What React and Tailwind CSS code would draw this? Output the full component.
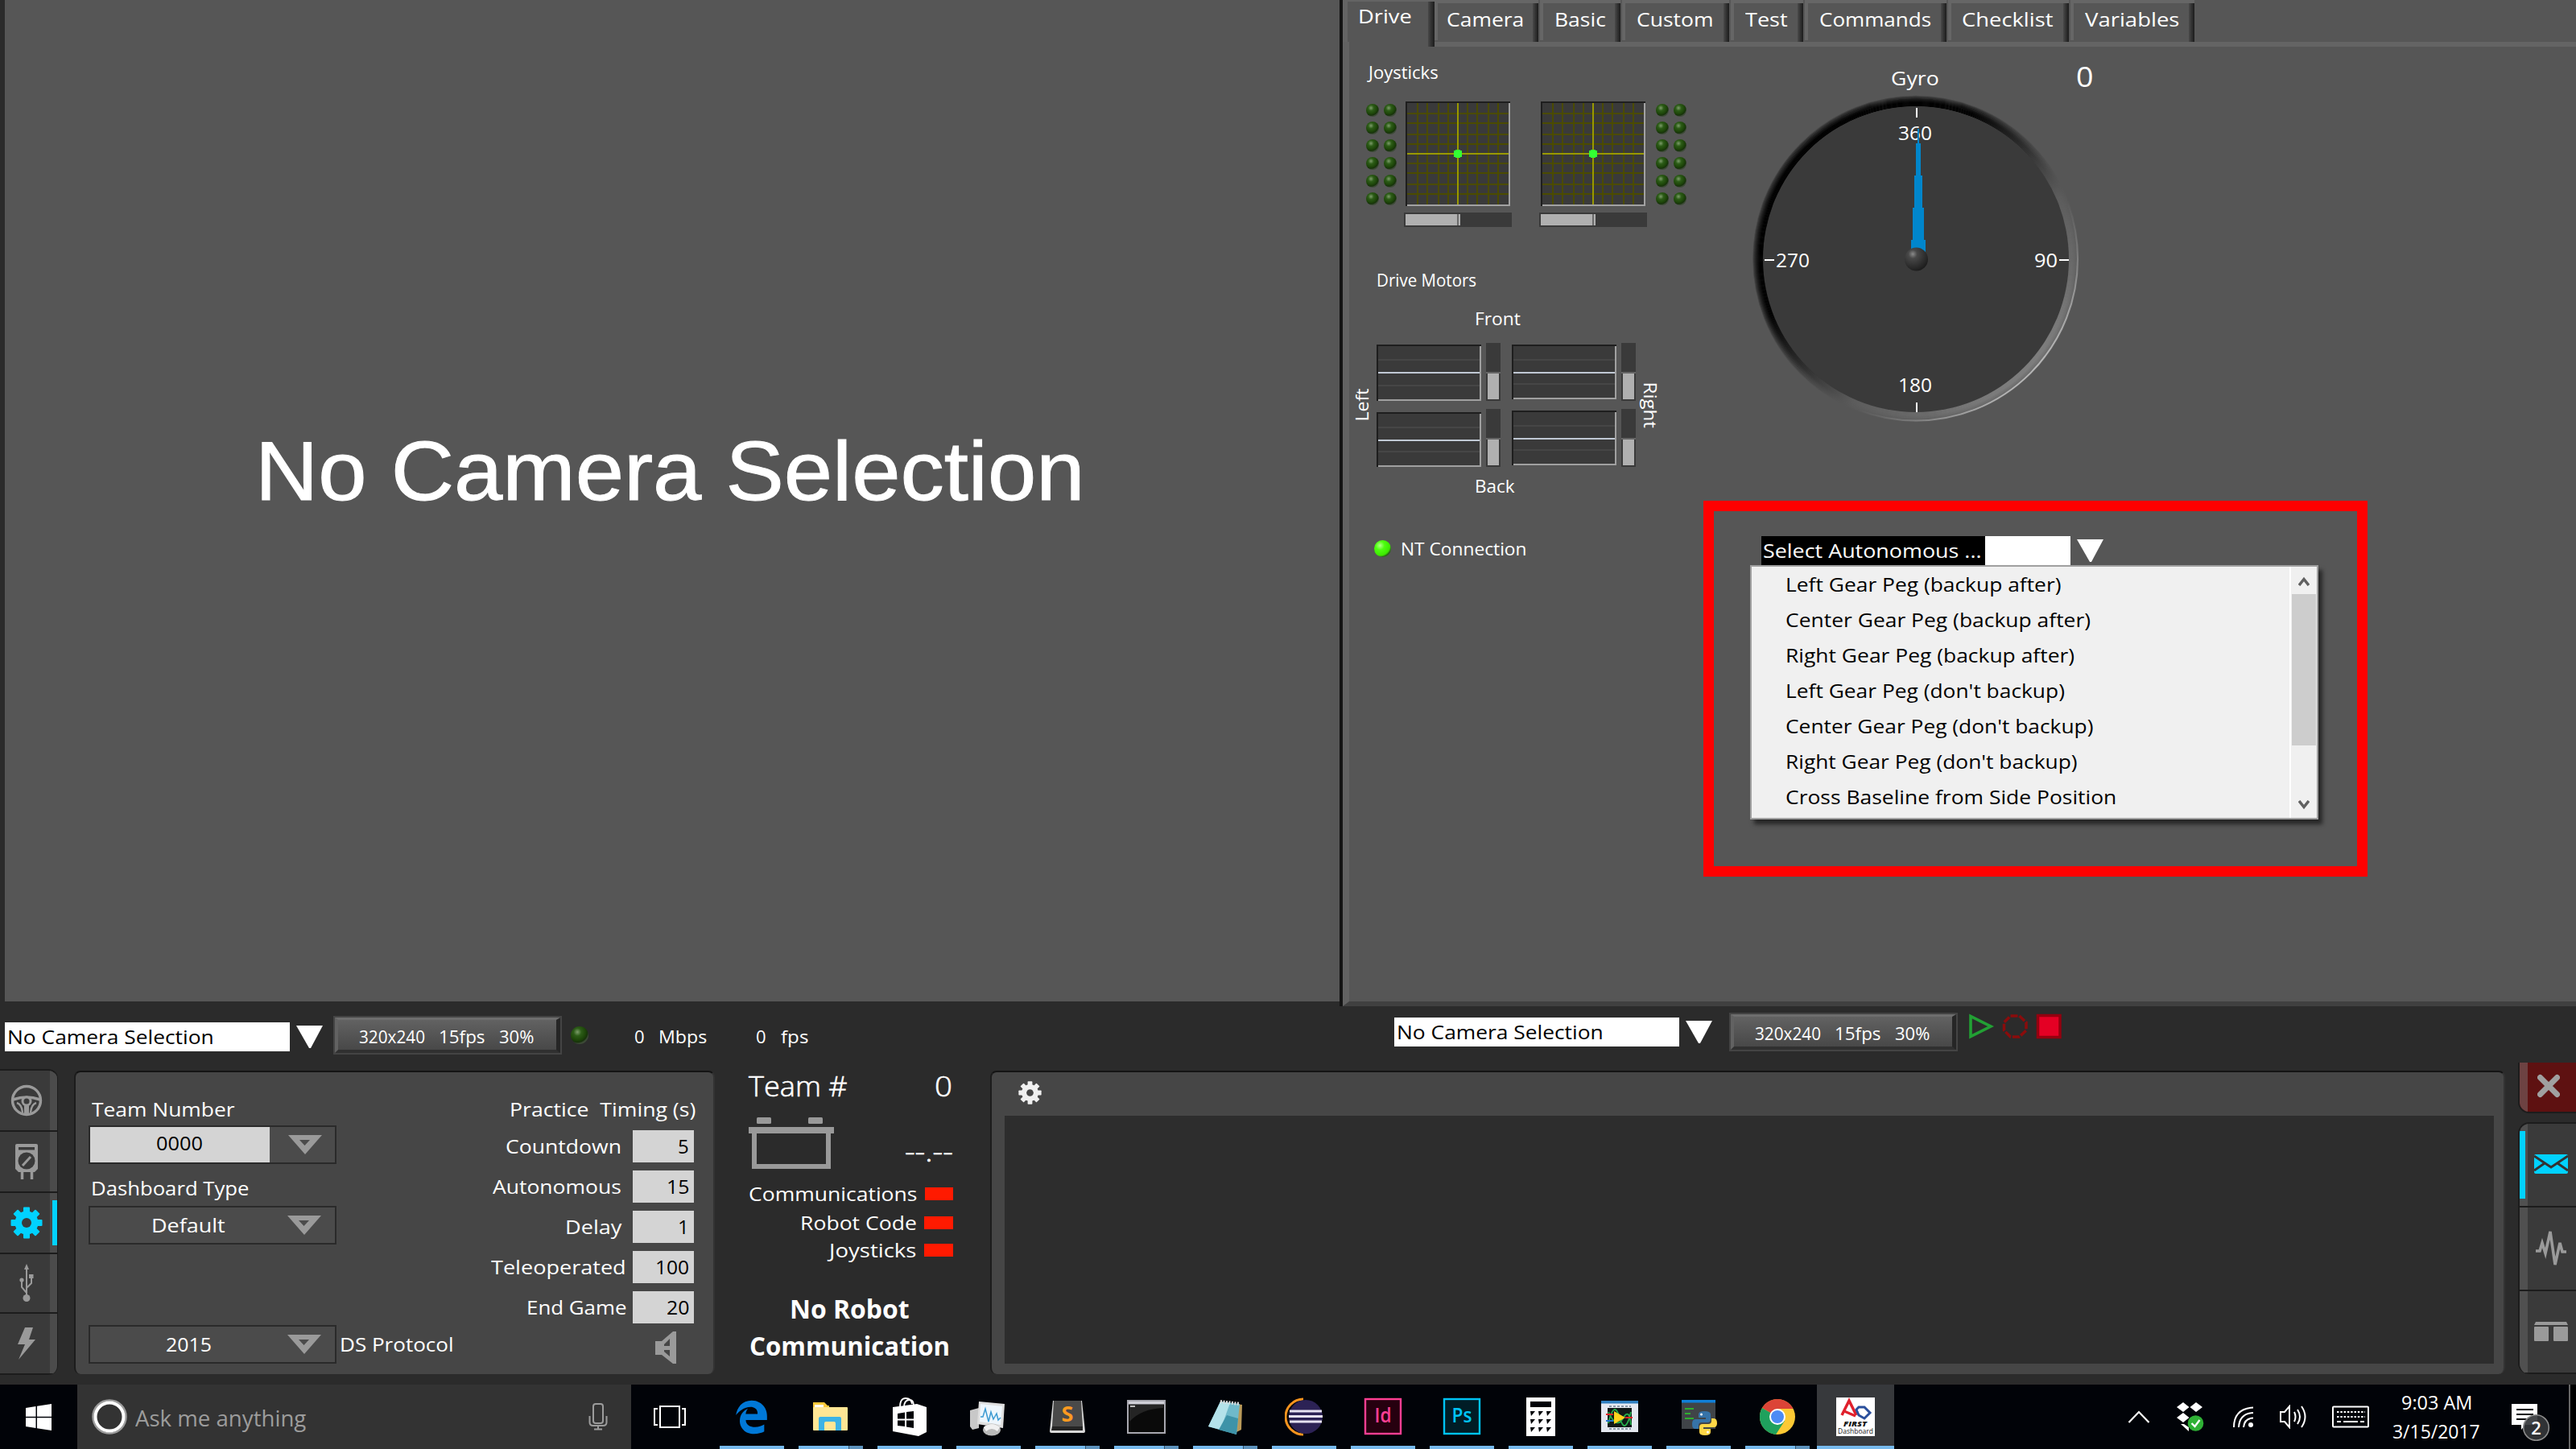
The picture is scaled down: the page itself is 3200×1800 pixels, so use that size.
import React, { useLayoutEffect, useRef, useState } from "react";

/* A label whose glyph run is fitted to the width of its box. */
function T({ className = "", children }) {
  const box = useRef(null);
  const run = useRef(null);
  const [k, setK] = useState(1);
  useLayoutEffect(() => {
    setK(box.current.clientWidth / run.current.offsetWidth);
  }, []);
  return (
    <div ref={box} className={"shrink-0 whitespace-pre " + className}>
      <span ref={run} className="inline-block origin-left" style={{ transform: `scaleX(${k})` }}>
        {children}
      </span>
    </div>
  );
}

const SM = "text-[22px] leading-[30px] ";
const MD = "text-2xl ";

/* ---------- tabs ---------- */
function Tab({ box, text, label }) {
  return (
    <div className={"flex h-[50px] shrink-0 border-t-4 border-l-4 border-[#666] bg-[#565656] " + box}>
      <T className={"mt-[4px] " + MD + text}>{label}</T>
      <div className="ml-auto h-[50px] w-[7px] shrink-0 bg-gradient-to-r from-[#4a4a4a] to-[#1c1c1c]" />
    </div>
  );
}

function Tabs() {
  return (
    <div className="flex h-[52px] shrink-0 gap-[2px]">
      <div className="flex h-[58px] w-[114px] shrink-0 border-t-2 border-l-[6px] border-[#646464] bg-[#565656]">
        <T className={"mt-[2px] ml-[13px] w-[67px] " + MD}>Drive</T>
        <div className="ml-auto h-[56px] w-2 shrink-0 bg-gradient-to-r from-[#484848] to-[#1c1c1c]" />
      </div>
      <Tab box="w-[129px] -ml-[2px]" text="ml-[11px] w-[96px]" label="Camera" />
      <Tab box="w-[100px]" text="ml-[14px] w-[64px]" label="Basic" />
      <Tab box="w-[133px]" text="ml-[14px] w-[95px]" label="Custom" />
      <Tab box="w-[90px]" text="ml-[14px] w-[53px]" label="Test" />
      <Tab box="w-[176px]" text="ml-[14px] w-[139px]" label="Commands" />
      <Tab box="w-[150px]" text="ml-[13px] w-[114px]" label="Checklist" />
      <Tab box="w-[154px]" text="ml-[14px] w-[118px]" label="Variables" />
    </div>
  );
}

/* ---------- joysticks ---------- */
function Led({ className }) {
  return (
    <div
      className={
        "shrink-0 rounded-full bg-[radial-gradient(circle_at_38%_32%,#7d9c6b_0%,#2c5c17_24%,#1d4509_50%,#17320b_62%,#3c4a36_70%)] " +
        className
      }
    />
  );
}

function LedGrid({ className }) {
  return (
    <div className={"mt-[3px] grid grid-cols-2 gap-[6px] " + className}>
      {Array.from({ length: 12 }, (_, i) => (
        <Led key={i} className="size-4" />
      ))}
    </div>
  );
}

function Stick() {
  const xs = [15, 27, 41, 53, 77, 89, 103, 115];
  const ys = [15, 27, 41, 53, 77, 89, 103, 115];
  return (
    <div className="w-[134px] shrink-0">
      <svg width="130" height="130" viewBox="0 0 130 130" className="ml-[2px] block" shapeRendering="crispEdges">
        <rect width="130" height="130" fill="#3a3a3a" />
        {xs.map((x) => <rect key={"x" + x} x={x - 1} width="2" height="130" fill="#4b4b00" />)}
        {ys.map((y) => <rect key={"y" + y} y={y - 1} width="130" height="2" fill="#4b4b00" />)}
        <rect x="64" width="2" height="130" fill="#999900" />
        <rect y="64" width="130" height="2" fill="#999900" />
        <path d="M0 130V0H130V2H2V130Z" fill="#1e1e1e" />
        <path d="M130 2V130H2V128H128V2Z" fill="#a2a2a2" />
        <rect x="60" y="61" width="10" height="8" fill="#33ff33" />
        <rect x="62" y="60" width="6" height="10" fill="#33ff33" />
      </svg>
      <div className="mt-2 flex h-[18px] bg-[#3a3a3a] p-[2px]">
        <div className="w-16 bg-[#b0b0b0]" />
        <div className="w-[2px] bg-[#6a6a6a]" />
        <div className="w-[2px] bg-[#b0b0b0]" />
      </div>
    </div>
  );
}

/* ---------- motors ---------- */
function Motor({ h, mid, lines, className = "" }) {
  return (
    <svg width="130" height={h} className={"block shrink-0 " + className} shapeRendering="crispEdges">
      <rect width="130" height={h} fill="#3a3a3a" />
      {lines.map((y) => <rect key={y} y={y - 1} width="130" height="2" fill="#464646" />)}
      <rect y={mid - 1} width="130" height="2" fill="#c0c8d4" />
      <path d={`M0 ${h}V0H130V2H2V${h}Z`} fill="#1e1e1e" />
      <path d={`M130 2V${h}H2V${h - 2}H128V2Z`} fill="#a0a0a0" />
    </svg>
  );
}

function Meter() {
  return (
    <div className="flex h-[72px] w-[18px] flex-col bg-[#3a3a3a]">
      <div className="mt-9 h-[2px] bg-[#666]" />
      <div className="mx-[2px] h-8 bg-[#b0b0b0]" />
    </div>
  );
}

function Motors() {
  return (
    <div className="mt-4 flex h-[154px]">
      <div className="flex w-[34px] items-center justify-center pr-[6px]">
        <T className={"w-[41px] -rotate-90 " + SM}>Left</T>
      </div>
      <div>
        <Motor h={70} mid={35} lines={[19, 51]} className="mt-[2px]" />
        <Motor h={68} mid={35} lines={[19, 49]} className="mt-[14px]" />
      </div>
      <div className="ml-[6px] flex flex-col gap-[10px]"><Meter /><Meter /></div>
      <div className="ml-[14px]">
        <Motor h={68} mid={35} lines={[19, 49]} className="mt-[2px]" />
        <Motor h={68} mid={35} lines={[19, 49]} className="mt-[14px]" />
      </div>
      <div className="ml-[6px] flex flex-col gap-[10px]"><Meter /><Meter /></div>
      <div className="flex w-9 items-center justify-center">
        <T className={"w-[57px] rotate-90 " + SM}>Right</T>
      </div>
    </div>
  );
}

/* ---------- gyro ---------- */
function Dial() {
  const rings = Array.from({ length: 13 }, (_, i) => i);
  return (
    <svg width="416" height="416" viewBox="2172 114 416 416" className="ml-[56px] block">
      <defs>
        <linearGradient id="rim" x1="0.14" y1="0.14" x2="0.86" y2="0.86">
          <stop offset="0" stopColor="#000" />
          <stop offset="0.3" stopColor="#020202" />
          <stop offset="0.5" stopColor="#303030" />
          <stop offset="0.68" stopColor="#5c5c5c" />
          <stop offset="0.88" stopColor="#6c6c6c" />
          <stop offset="1" stopColor="#808080" />
        </linearGradient>
        <linearGradient id="shine" x1="0.14" y1="0.14" x2="0.86" y2="0.86">
          <stop offset="0.7" stopColor="#888" stopOpacity="0" />
          <stop offset="1" stopColor="#bbb" />
        </linearGradient>
        <radialGradient id="hub" cx="0.35" cy="0.28" r="0.75">
          <stop offset="0" stopColor="#8a8a8a" />
          <stop offset="0.25" stopColor="#484848" />
          <stop offset="0.8" stopColor="#282828" />
          <stop offset="1" stopColor="#1c1c1c" />
        </radialGradient>
      </defs>
      {rings.map((i) => (
        <circle key={i} cx="2380" cy="321.5" r={190 + i} fill="none" stroke="url(#rim)" strokeWidth="1.5" opacity={Math.min(1, 1.4 - i / 10)} />
      ))}
      <circle cx="2380" cy="321.5" r="201" fill="none" stroke="url(#shine)" strokeWidth="2" />
      <circle cx="2380" cy="322" r="190" fill="#3a3a3a" />
      <g fill="#fff" shapeRendering="crispEdges">
        <rect x="2380" y="134" width="2" height="12" />
        <rect x="2380" y="500" width="2" height="12" />
        <rect x="2192" y="322" width="12" height="2" />
        <rect x="2558" y="322" width="12" height="2" />
      </g>
      <g fill="#fff" fontSize="24">
        <text x="2358" y="174" textLength="42" lengthAdjust="spacingAndGlyphs">360</text>
        <text x="2206" y="332" textLength="42" lengthAdjust="spacingAndGlyphs">270</text>
        <text x="2527" y="332" textLength="29" lengthAdjust="spacingAndGlyphs">90</text>
        <text x="2358" y="487" textLength="42" lengthAdjust="spacingAndGlyphs">180</text>
      </g>
      <path
        d="M2382 160h2V178h2V218h2V258h2V298h2V314H2374V298h2V258h2V218h2V178h2Z"
        fill="#0086cc"
        shapeRendering="crispEdges"
      />
      <circle cx="2380.500" cy="322" r="14.500" fill="url(#hub)" />
    </svg>
  );
}

/* ---------- autonomous selector ---------- */
function Down({ className = "" }) {
  return (
    <svg width="33" height="28" viewBox="0 0 33 28" className={"block shrink-0 " + className}>
      <path d="M0 0H33L18 28H16Z" fill="#fff" />
    </svg>
  );
}

const modes = [
  ["w-[343px]", "Left Gear Peg (backup after)"],
  ["w-[379px]", "Center Gear Peg (backup after)"],
  ["w-[359px]", "Right Gear Peg (backup after)"],
  ["w-[347px]", "Left Gear Peg (don't backup)"],
  ["w-[382px]", "Center Gear Peg (don't backup)"],
  ["w-[362px]", "Right Gear Peg (don't backup)"],
  ["w-[411px]", "Cross Baseline from Side Position"],
];

function Selector() {
  return (
    <div className="mt-[92px] h-[467px] w-[825px] border-[13px] border-[#ff0000]">
      <div className="mt-[31px] ml-[59px] flex">
        <div className="h-9 w-[384px] bg-white">
          <div className="h-9 w-[278px] bg-black pl-[2px]">
            <T className={"w-[271px] pt-[2px] text-white " + MD}>Select Autonomous ...</T>
          </div>
        </div>
        <Down className="mt-1 ml-2" />
      </div>
      <div className="ml-[45px] flex h-[316px] w-[706px] border-2 border-[#a0a0a0] bg-[#f0f0f0] shadow-[5px_6px_5px_rgba(0,0,0,0.55)]">
        <div className="flex-1 pl-[42px] text-black">
          {modes.map(([w, name]) => (
            <T key={name} className={"text-2xl leading-[44px] " + w}>{name}</T>
          ))}
        </div>
        <div className="flex w-[34px] flex-col items-center border-l-2 border-white">
          <svg width="14" height="12" viewBox="0 0 14 12" className="mt-3"><path d="M1 11L7 3.500L13 11" fill="none" stroke="#606060" strokeWidth="3.500" /></svg>
          <div className="mt-[10px] h-[188px] w-[30px] bg-[#cdcdcd]" />
          <svg width="14" height="12" viewBox="0 0 14 12" className="mt-auto mb-[10px]"><path d="M1 1L7 8.500L13 1" fill="none" stroke="#606060" strokeWidth="3.500" /></svg>
        </div>
      </div>
    </div>
  );
}

/* ---------- camera strip ---------- */
function CameraPick({ button }) {
  return (
    <>
      <div className="h-9 w-[354px] shrink-0 bg-white pl-[3px]">
        <T className={"w-[257px] pt-[2px] text-black " + MD}>No Camera Selection</T>
      </div>
      <Down className="mt-1 ml-2" />
      <div className={"flex h-12 w-[284px] shrink-0 border-2 border-[#444] " + button}>
        <div className="flex w-full border-t-[3px] border-r-[5px] border-b-4 border-l-4 border-t-[#6e6e6e] border-r-[#262626] border-b-[#303030] border-l-[#626262] bg-gradient-to-b from-[#626262] to-[#484848]">
          <T className={"mt-[5px] ml-[26px] w-[82px] " + SM}>320x240</T>
          <T className={"mt-[5px] ml-[17px] w-[58px] " + SM}>15fps</T>
          <T className={"mt-[5px] ml-[17px] w-[43px] " + SM}>30%</T>
        </div>
      </div>
    </>
  );
}

function Strip() {
  return (
    <div className="flex h-[70px] shrink-0">
      <div className="flex w-[1732px] items-start pt-5 pl-[6px]">
        <CameraPick button="-mt-[8px] ml-[13px]" />
        <Led className="mt-[5px] ml-[11px] size-[22px]" />
        <T className={"mt-[2px] ml-[57px] w-[13px] " + SM}>0</T>
        <T className={"mt-[2px] ml-[17px] w-[60px] " + SM}>Mbps</T>
        <T className={"mt-[2px] ml-[61px] w-[13px] " + SM}>0</T>
        <T className={"mt-[2px] ml-[18px] w-[34px] " + SM}>fps</T>
      </div>
      <div className="flex items-start pt-[14px]">
        <CameraPick button="-mt-[6px] ml-[21px]" />
        <svg width="116" height="32" viewBox="0 0 116 32" className="-mt-[5px] ml-[14px]">
          <path d="M2 3.500V28.500L27 16Z" fill="none" stroke="#22a034" strokeWidth="3.600" />
          <path d="M51.500 3H62.500L71 11V21L62.500 29H51.500L43.500 21V11Z" fill="none" stroke="#8a0c0c" strokeWidth="3.500" strokeDasharray="9 2" />
          <rect x="85.500" y="2.500" width="27.500" height="27" fill="#e40024" stroke="#94000f" strokeWidth="3.500" />
        </svg>
      </div>
    </div>
  );
}

/* ---------- driver station ---------- */
function Gear({ size, color, hole, className = "" }) {
  return (
    <svg width={size} height={size} viewBox="-20 -20 40 40" className={className}>
      {[0, 45, 90, 135].map((a) => (
        <rect key={a} x="-4" y="-19.500" width="8" height="39" rx="1" fill={color} transform={`rotate(${a})`} />
      ))}
      <circle r="14.500" fill={color} />
      <circle r="6" fill={hole} />
    </svg>
  );
}

function SideCell({ h, active, children }) {
  return (
    <div className={"flex w-[71px] shrink-0 items-center border-b-2 border-[#1c1c1c] bg-[#3a3a3a] " + h}>
      <div className="flex w-[62px] items-center justify-center pl-[4px]">{children}</div>
      <div className="flex h-full w-[9px] items-center bg-[#4b4b4b]">
        {active && <div className="ml-[3px] h-14 w-[6px] bg-[#00d2ff]" />}
      </div>
    </div>
  );
}

function SideBar() {
  return (
    <div className="mt-2 h-[380px] w-[72px] shrink-0 overflow-hidden rounded-r-xl border-t-2 border-r border-[#1c1c1c]">
      <SideCell h="h-[76px]">
        <svg width="40" height="40" viewBox="-20 -20 40 40" fill="none" stroke="#9a9a9a">
          <circle r="17.500" strokeWidth="3.400" />
          <path d="M-17-1Q-8-4 0-4T17-1" strokeWidth="3.500" />
          <circle cy="1" r="5" strokeWidth="3" fill="#3a3a3a" />
          <path d="M-12 3Q-6 5-5 15M12 3Q6 5 5 15" strokeWidth="2.400" />
          <path d="M0 6V17" strokeWidth="6" />
        </svg>
      </SideCell>
      <SideCell h="h-[76px]">
        <svg width="30" height="46" viewBox="0 0 30 46">
          <path d="M3 1H27Q29 1 29 3V32L25 36H5L1 32V3Q1 1 3 1Z" fill="#9a9a9a" />
          <rect x="5" y="5" width="20" height="3.500" fill="#3a3a3a" />
          <circle cx="15" cy="22" r="10.500" fill="#3a3a3a" />
          <path d="M10 28L20 17" stroke="#9a9a9a" strokeWidth="3" />
          <path d="M9.500 36V45M21.500 36V45" stroke="#9a9a9a" strokeWidth="3.500" />
        </svg>
      </SideCell>
      <SideCell h="h-[76px]" active>
        <Gear size={40} color="#00d2ff" hole="#3a3a3a" />
      </SideCell>
      <SideCell h="h-[74px]">
        <svg width="20" height="48" viewBox="0 0 20 48" fill="none" stroke="#9a9a9a" strokeWidth="2">
          <path d="M10 4V42M10 36L4 29V20M10 30L16 24V16" />
          <path d="M10 0L13 7H7Z" fill="#9a9a9a" stroke="none" />
          <circle cx="10" cy="42.500" r="4.500" fill="#9a9a9a" stroke="none" />
          <circle cx="4" cy="20" r="2.600" fill="#9a9a9a" stroke="none" />
          <rect x="13" y="13" width="5.500" height="5" fill="#9a9a9a" stroke="none" />
        </svg>
      </SideCell>
      <SideCell h="h-[76px]">
        <svg width="24" height="40" viewBox="0 0 24 40"><path d="M10 0H20L15 15H23L2 40L10 21H1Z" fill="#9a9a9a" /></svg>
      </SideCell>
    </div>
  );
}

function Combo({ children, className = "" }) {
  return (
    <div className={"flex h-12 w-[308px] shrink-0 border-2 border-[#2a2a2a] bg-[#4b4b4b] " + className}>
      {children}
      <div className="ml-auto flex w-[82px] items-center">
        <svg width="42" height="24" viewBox="0 0 42 24" className="ml-[23px]">
          <path fillRule="evenodd" d="M0 0H42L21 24ZM14 6L20.500 13L27 6Z" fill="#9a9a9a" />
        </svg>
      </div>
    </div>
  );
}

function TimeRow({ label, w, pad = "mr-[14px]", value, vw }) {
  return (
    <div className="flex h-10 items-center">
      <T className={MD + pad + " " + w}>{label}</T>
      <div className="flex h-10 w-[76px] items-center justify-end bg-[#d4d4d4] pr-[6px] text-black">
        <T className={MD + vw}>{value}</T>
      </div>
    </div>
  );
}

function Setup() {
  return (
    <div className="mt-[10px] ml-5 flex h-[377px] w-[796px] shrink-0 justify-between rounded-lg border-t-2 border-r-2 border-l-2 border-t-[#141414] border-r-[#333] border-l-[#1c1c1c] bg-[#464646] pr-6 pl-4">
      <div className="flex flex-col">
        <T className={"mt-[30px] ml-1 w-[177px] " + MD}>Team Number</T>
        <Combo className="mt-[4px]">
          <div className="flex h-11 w-[224px] items-center justify-center bg-[#d4d4d4] text-black">
            <T className={"w-[58px] -mt-[4px] " + MD}>0000</T>
          </div>
        </Combo>
        <T className={"mt-[14px] ml-[3px] w-[197px] " + MD}>Dashboard Type</T>
        <Combo className="mt-[6px]">
          <T className={"mt-[6px] ml-[76px] w-[92px] " + MD}>Default</T>
        </Combo>
        <div className="mt-[100px] flex">
          <Combo>
            <T className={"mt-[6px] ml-[94px] w-[57px] " + MD}>2015</T>
          </Combo>
          <T className={"mt-2 ml-[4px] w-[141px] " + MD}>DS Protocol</T>
        </div>
      </div>
      <div className="flex flex-col items-end">
        <T className={"mt-[30px] -mr-[2px] w-[231px] " + MD}>Practice  Timing (s)</T>
        <div className="mt-[10px] flex flex-col items-end gap-[10px]">
          <TimeRow label="Countdown" w="w-[144px]" value="5" vw="w-[14px]" />
          <TimeRow label="Autonomous" w="w-[160px]" value="15" vw="w-[28px]" />
          <TimeRow label="Delay" w="w-[70px]" value="1" vw="w-[14px]" />
          <TimeRow label="Teleoperated" w="w-[168px]" pad="mr-[8px]" value="100" vw="w-[42px]" />
          <TimeRow label="End Game" w="w-[124px]" pad="mr-[8px]" value="20" vw="w-[28px]" />
        </div>
        <svg width="26" height="40" viewBox="0 0 26 40" className="mt-[10px] mr-[22px]">
          <path fillRule="evenodd" d="M0 12H8L22 0H26V40H22L8 29H0ZM18 9L11 16V18H18ZM18 31L11 25V23H18Z" fill="#9a9a9a" />
        </svg>
      </div>
    </div>
  );
}

function StatusRow({ label, w, className }) {
  return (
    <div className={"flex h-8 items-center justify-end " + className}>
      <T className={MD + w}>{label}</T>
      <div className="ml-[9px] h-4 w-9 bg-[#ff1a00]" />
    </div>
  );
}

function Status() {
  return (
    <div className="flex w-[342px] shrink-0 flex-col pr-[46px] pl-[42px]">
      <div className="mt-[9px] flex justify-between">
        <T className="w-[123px] text-[35px] leading-10 font-light [-webkit-text-stroke:0.6px_white]">Team #</T>
        <T className="mr-px w-[22px] text-[35px] leading-10 font-light [-webkit-text-stroke:0.6px_white]">0</T>
      </div>
      <div className="mt-[19px] flex h-16 justify-between">
        <svg width="106" height="64" viewBox="0 0 106 64" fill="#999">
          <rect x="10" y="0" width="18" height="8" rx="1.500" />
          <rect x="74" y="0" width="18" height="8" rx="1.500" />
          <rect x="0" y="12" width="106" height="8" />
          <path d="M4 14H10V58H96V14H102V64H4Z" />
        </svg>
        <T className="mt-[22px] w-[60px] text-[34px] leading-10 font-light [-webkit-text-stroke:0.6px_white]">--.--</T>
      </div>
      <StatusRow className="mt-[15px]" label="Communications" w="w-[210px]" />
      <StatusRow className="mt-[4px]" label="Robot Code" w="w-[145px]" />
      <StatusRow className="mt-[2px]" label="Joysticks" w="w-[109px]" />
      <div className="mt-[34px] flex flex-col items-center pr-[3px] font-bold">
        <T className="w-[149px] text-[33px] leading-[46px]">No Robot</T>
        <T className="w-[249px] text-[33px] leading-[46px]">Communication</T>
      </div>
    </div>
  );
}

function Messages() {
  return (
    <div className="mt-[10px] flex h-[377px] w-[1882px] shrink-0 flex-col rounded-lg border-t-2 border-r-2 border-l-2 border-t-[#141414] border-r-[#333] border-l-[#1c1c1c] bg-[#464646] pr-3 pl-4">
      <div className="flex h-[54px] items-center pb-[3px] pl-[17px]">
        <Gear size={29} color="#f0f0f0" hole="#464646" />
      </div>
      <div className="h-[308px] bg-[#2d2d2d]" />
    </div>
  );
}

function RightCell({ h, active, children }) {
  return (
    <div className={"flex shrink-0 border-b-2 border-[#1c1c1c] bg-[#3a3a3a] " + h}>
      <div className="flex h-full w-[10px] shrink-0 items-center bg-[#505050]">
        {active && <div className="h-[84px] w-[7px] bg-[#00d2ff]" />}
      </div>
      <div className="flex flex-1 items-center pb-[2px] pl-2">{children}</div>
    </div>
  );
}

function RightBar() {
  return (
    <div className="ml-4 flex w-[72px] shrink-0 flex-col">
      <div className="flex h-[63px] shrink-0 overflow-hidden rounded-bl-[14px] border-b-2 border-l-2 border-[#1c1c1c] bg-[#5e1111]">
        <div className="w-[10px] bg-[#6d4242]" />
        <svg width="28" height="30" viewBox="0 0 28 30" className="mt-[14px] ml-3">
          <path d="M3.500 4.500L24.500 25.500M24.500 4.500L3.500 25.500" stroke="#a0a0a0" strokeWidth="7" strokeLinecap="round" />
        </svg>
      </div>
      <div className="mt-[11px] h-[313px] overflow-hidden rounded-l-[14px] border-t-2 border-l-2 border-[#1c1c1c]">
        <RightCell h="h-[104px]" active>
          <svg width="42" height="24" viewBox="0 0 42 24">
            <rect width="42" height="24" rx="2" fill="#00d2ff" />
            <path d="M0 2L15 12L21 16L27 12L42 2M0 20L13 11M42 20L29 11" fill="none" stroke="#333" strokeWidth="3" />
          </svg>
        </RightCell>
        <RightCell h="h-[104px]">
          <svg width="42" height="48" viewBox="0 0 42 48" fill="none" stroke="#9a9a9a" strokeWidth="3.600">
            <path d="M2 28H7L10 18L14 31L20 4L26 45L32 18L35 29H40" />
          </svg>
        </RightCell>
        <RightCell h="h-[103px]">
          <svg width="42" height="24" viewBox="0 0 42 24" fill="#9a9a9a">
            <path d="M2 0H40L42 4H0Z" />
            <rect y="6" width="18" height="18" rx="1" />
            <rect x="24" y="6" width="18" height="18" rx="1" />
          </svg>
        </RightCell>
      </div>
    </div>
  );
}

/* ---------- taskbar icons, all on a 48 unit square ---------- */
const Edge = (
  <svg x="2" y="3" width="43" height="43" viewBox="0 0 512 512"><path fill="#0078d7" d="M25.714 228.163c.111-.162.23-.323.342-.485-.021.162-.045.323-.065.485h-.277zm460.572 15.508c0-44.032-7.754-84.465-28.801-122.405C416.498 47.879 343.912 8.001 258.893 8.001 118.962 7.724 40.617 113.214 26.056 227.679c42.429-61.312 117.073-121.376 220.375-124.966 0 0 109.666 0 99.419 104.957H169.997c6.369-37.386 18.554-58.986 34.339-78.926-75.049 34.893-121.844 96.103-120.733 188.319.83 71.450 50.130 144.836 120.733 171.982 83.357 31.843 192.775 7.200 240.132-21.323V364.082c-80.864 56.494-270.873 60.925-272.255-67.572h314.073v-52.839z" /></svg>
);
const Folder = (
  <>
    <path d="M2 6H16L20 10H22V14H2Z" fill="#fcc93a" />
    <rect x="4" y="9" width="11" height="3" fill="#fff" />
    <rect x="2" y="12" width="43" height="29" rx="1" fill="#ffe694" />
    <path d="M9 41V26Q9 24 11 24H35Q37 24 37 26V41H30V32Q30 30 28 30H18Q16 30 16 32V41Z" fill="#3cb3e6" />
  </>
);
const Store = (
  <>
    <path d="M12 12Q12 1 19 1T27 8M17 12Q17 4 23 3T29 10" fill="none" stroke="#fff" strokeWidth="1.800" />
    <path d="M3 12L33 8L45 12V43L35 48L3 42Z" fill="#fff" />
    <path d="M9 20L18 18.500V26.500H9ZM20 18L29 17V26.500H20ZM9 28.500H18V36L9 35ZM20 28.500H29V38L20 36.500Z" fill="#010308" />
  </>
);
const Monitor = (
  <>
    <path d="M1 16L12 13V38L4 40L1 36Z" fill="#c8c8c8" />
    <path d="M12 5L44 8L42 38L10 33Z" fill="#dedede" />
    <path d="M14 8L41 11L39 34L13 30Z" fill="#eef6fc" />
    <path d="M14 24L17 24L20 14L24 30L27 18L30 27L34 20L36 28L39 25" fill="none" stroke="#3c9ad2" strokeWidth="1.500" />
    <ellipse cx="28" cy="40" rx="11" ry="7.500" fill="#b9b9b9" />
    <path d="M18 37Q28 29 38 37L35 42Q28 36 21 42Z" fill="#f0f0f0" />
  </>
);
const Sublime = (
  <>
    <path d="M6 4H42L46 42Q46 44 44 44H4Q2 44 2 42Z" fill="#d8d8d8" />
    <path d="M7 4H41L43 36H5Z" fill="#4a4a4a" />
    <path d="M5 36H43V41H4Z" fill="#242424" />
    <text x="24" y="30" textAnchor="middle" fontSize="27" fontWeight="700" fill="#ff9a20">S</text>
  </>
);
const Cmd = (
  <>
    <rect x="1" y="4" width="46" height="40" fill="#0a0a0a" stroke="#a8a8b0" strokeWidth="2" />
    <rect x="2" y="5" width="44" height="3.500" fill="#d0d0d8" />
    <path d="M3 30Q18 14 45 13V9H3Z" fill="#242424" />
    <path d="M4 11H10" stroke="#bbb" strokeWidth="2" />
  </>
);
const Notepad = (
  <>
    <path d="M38 8L45 9L44 40L36 44Z" fill="#b99a5a" />
    <path d="M18 5L42 8L38 46L3 36Z" fill="#6fb9ca" />
    <path d="M18 5L30 7L18 40L3 36Z" fill="#b4e2ea" />
    <path d="M26 22L40 26L38 46L16 40Z" fill="#3e93a8" />
    <path d="M18 5L42 8" stroke="#ddd" strokeWidth="4" strokeDasharray="2 1.500" />
  </>
);
const Eclipse = (
  <>
    <path d="M23 2A22 22 0 0 0 23 46" fill="none" stroke="#f7941e" strokeWidth="3" />
    <circle cx="26" cy="24" r="21" fill="#2c2255" />
    <path d="M6 17H46M5 23.500H47M6 30H46" stroke="#e6e2f2" strokeWidth="3" />
  </>
);
const adobe = (t, c, bg, w) => (
  <>
    <rect x="2" y="2" width="44" height="43" fill={bg} stroke={c} strokeWidth="2.400" />
    <text x={24 - w / 2} y="31" textLength={w} lengthAdjust="spacingAndGlyphs" fontSize="26" fontWeight="600" fill={c}>{t}</text>
  </>
);
const Calc = (
  <>
    <rect x="6" width="36" height="48" fill="#fff" />
    <rect x="11" y="5" width="26" height="7" fill="#010308" />
    {[17, 27, 37].map((y) => [11, 21, 31].map((x) => <path key={x + "-" + y} d={`M${x} ${y}H${x + 6}L${x + 1} ${y + 6}Z`} fill="#010308" />))}
  </>
);
const LabView = (
  <>
    <rect x="1" y="4" width="46" height="39" fill="#e4e8f0" />
    <rect x="1" y="4" width="46" height="3.500" fill="#2f7fc0" />
    <rect x="9" y="13" width="30" height="24" fill="#101818" />
    <path d="M11 11H38M11 39H38" stroke="#8a98a8" strokeWidth="2" strokeDasharray="3 2" />
    <path d="M10 32Q17 2 24 25T38 18M10 18Q20 40 28 26T38 34" fill="none" stroke="#26b04c" strokeWidth="1.800" />
    <path d="M17 17L31 25L17 33Z" fill="#ffd21e" />
    <path d="M7 21H16M31 25H40" stroke="#e02828" strokeWidth="2" />
    <path d="M7 29H16" stroke="#2474d0" strokeWidth="2" />
  </>
);
const Python = (
  <>
    <rect x="3" y="3" width="42" height="36" fill="#404448" />
    <rect x="3" y="3" width="42" height="3.500" fill="#0f7fd8" />
    <path d="M7 14H18M7 20H14M7 26H18" stroke="#2fae2f" strokeWidth="2" />
    <path d="M31 17Q24 17 24 21V25H33V27H20Q16 27 16 33Q16 39 20 39H24V35Q24 31 28 31H35Q39 31 39 27V21Q39 17 31 17Z" fill="#3673a8" />
    <path d="M32 47Q39 47 39 43V39H30V37H43Q47 37 47 32Q47 26 43 26H40V29Q40 33 36 33H29Q25 33 25 37V43Q25 47 32 47Z" fill="#ffd747" />
    <circle cx="27.500" cy="21" r="1.500" fill="#fff" />
    <circle cx="35.500" cy="43" r="1.500" fill="#fff" />
  </>
);
const Chrome = (
  <>
    <circle cx="24" cy="24" r="22" fill="#fcc934" />
    <path d="M4.950 13A22 22 0 0 1 43.050 13V14H24V24Z" fill="#dc4437" />
    <path d="M4.950 13A22 22 0 0 0 22 46L33 29L24 24Z" fill="#1fa15d" />
    <circle cx="24" cy="24" r="10" fill="#fff" />
    <circle cx="24" cy="24" r="8" fill="#4c8bf5" />
  </>
);
const First = (
  <>
    <rect y="0" width="48" height="48" fill="#fff" />
    <path d="M7 22L16 4L25 22" fill="none" stroke="#e0202c" strokeWidth="3.500" />
    <path d="M10 17L24 23" stroke="#e0202c" strokeWidth="3" />
    <path d="M28 12L35 12L42 19L35 26L28 22L25 15Z" fill="none" stroke="#2a4f9c" strokeWidth="3" />
    <text x="9" y="36" textLength="29" lengthAdjust="spacingAndGlyphs" fontSize="9" fontWeight="800" fontStyle="italic" fill="#111">FIRST</text>
    <text x="2" y="45" textLength="44" lengthAdjust="spacingAndGlyphs" fontSize="9" fill="#222">Dashboard</text>
  </>
);

const apps = [
  [Edge], [Folder, true], [Store], [Monitor], [Sublime, true], [Cmd, true], [Notepad, true], [Eclipse],
  [adobe("Id", "#ff3f93", "#26000f", 21)], [adobe("Ps", "#00c4f5", "#001d26", 25)], [Calc], [LabView], [Python], [Chrome, true],
];

function TaskApp({ art, stacked }) {
  return (
    <div className="flex h-20 w-[98px] shrink-0 flex-col items-center">
      <svg width="48" height="48" viewBox="0 0 48 48" className="mt-4">{art}</svg>
      <div className="mt-3 flex h-1 w-20 justify-end bg-[#76b9ed]">
        {stacked && <div className="w-[18px] border-l border-[#35526c] bg-[#5d92bd]" />}
      </div>
    </div>
  );
}

function Taskbar() {
  return (
    <div className="flex h-20 shrink-0 bg-[#010308]">
      <div className="flex w-24 items-center justify-center">
        <svg width="32" height="33" viewBox="0 0 32 33" fill="#fff"><path d="M0 5L12.500 3V15.800H0ZM14 2.800L32 0V15.800H14ZM0 17.200H12.500V30L0 28ZM14 17.200H32V33L14 30.200Z" /></svg>
      </div>
      <div className="flex w-[688px] items-center bg-[#333]">
        <svg width="44" height="44" viewBox="-22 -22 44 44" className="ml-[18px]">
          <circle r="20.500" fill="none" stroke="#9c9c9c" strokeWidth="2.500" />
          <circle r="17.500" fill="none" stroke="#fff" strokeWidth="4" />
        </svg>
        <T className="ml-[10px] w-[212px] pt-px text-[28px] leading-10 text-[#9c9c9c]">Ask me anything</T>
        <svg width="24" height="34" viewBox="0 0 24 34" className="ml-[351px]" fill="none" stroke="#9c9c9c" strokeWidth="2">
          <rect x="6" y="1" width="12" height="24" rx="3" />
          <path d="M1.500 16V24Q1.500 28 6 28H18Q22.500 28 22.500 24V16M12 28V32M7 32.500H17" />
        </svg>
      </div>
      <div className="flex w-[101px] items-center pl-[27px]">
        <svg width="42" height="30" viewBox="0 0 42 30" fill="none" stroke="#fff" strokeWidth="2">
          <rect x="9" y="2" width="24" height="26" />
          <path d="M6 5H2V25H6M36 5H40V25H36" />
        </svg>
      </div>
      {apps.map(([art, stacked], i) => <TaskApp key={i} art={art} stacked={stacked} />)}
      <div className="flex w-24 flex-col items-center bg-[#37393c]">
        <svg width="48" height="48" viewBox="0 0 48 48" className="mt-4">{First}</svg>
        <div className="mt-3 h-1 w-24 bg-[#76b9ed]" />
      </div>
      <div className="ml-auto flex items-center">
        <svg width="28" height="18" viewBox="0 0 28 18" fill="none" stroke="#fff" strokeWidth="2.200"><path d="M1.500 16L14 3L26.500 16" /></svg>
        <svg width="34" height="36" viewBox="0 0 34 36" className="ml-[33px]">
          <path d="M8 0L15.500 6L8 12L0 6ZM24 0L32 6L24 12L16.500 6ZM8 13L15.500 19L8 25L0 19ZM5 27L9 27L15 31V36Z" fill="#fff" />
          <circle cx="23.500" cy="26" r="9.800" fill="#2fb135" />
          <path d="M18.500 26L22.500 30L28.500 22" fill="none" stroke="#fff" strokeWidth="2.400" />
        </svg>
        <svg width="26" height="26" viewBox="0 0 26 26" className="ml-9" fill="none" stroke="#fff" strokeWidth="2">
          <path d="M1 26Q1 3 25 1.500M7 26Q8 9 25 8M13 26Q14 15 25 14.500" />
          <circle cx="22" cy="23" r="3" fill="#fff" stroke="none" />
        </svg>
        <svg width="34" height="30" viewBox="0 0 34 30" className="ml-8" fill="none" stroke="#fff" strokeWidth="2">
          <path d="M1 9H6L12 2V28L6 21H1ZM18 9Q21 15 18 21M22 6Q28 15 22 24M27 2Q36 15 27 28" />
        </svg>
        <svg width="46" height="28" viewBox="0 0 46 28" className="ml-[31px]" fill="none" stroke="#fff" strokeWidth="2">
          <rect x="1" y="1.500" width="44" height="25" rx="1" />
          <path d="M6 8H41M6 14H41" strokeDasharray="2.500 1.800" />
          <path d="M6 20H11M14 20H32M35 20H40" />
        </svg>
        <div className="ml-[28px] flex w-[111px] flex-col items-center">
          <T className="-mt-px w-[88px] text-2xl leading-9">9:03 AM</T>
          <T className="w-[109px] text-2xl leading-9">3/15/2017</T>
        </div>
        <svg width="48" height="50" viewBox="0 0 48 50" className="mt-[10px] ml-[38px]">
          <path d="M0 4H32V30H17L12 36V30H0Z" fill="#fff" />
          <path d="M6 11H27M6 17H27M6 23H22" stroke="#010308" strokeWidth="2" />
          <circle cx="30.500" cy="33.500" r="15.800" fill="#34363a" fillOpacity="0.920" stroke="#8c8c8c" strokeWidth="1.600" />
          <text x="30.500" y="41.500" textAnchor="middle" fontSize="22" fontWeight="600" fill="#fff">2</text>
        </svg>
        <div className="ml-[23px] h-20 w-[9px] border-l-2 border-[#666] bg-black" />
      </div>
    </div>
  );
}

export default function App() {
  return (
    <div className="flex h-[1800px] w-[3200px] flex-col overflow-hidden bg-[#2b2b2b] font-['Open_Sans','Noto_Sans',sans-serif] text-white">
      <div className="flex h-[1250px] shrink-0">
        <div className="ml-[6px] flex h-[1244px] w-[1658px] shrink-0 bg-[#565656]">
          <T className="mt-[525px] ml-[311px] w-[1030px] font-['Liberation_Sans',sans-serif] text-[104px] leading-[120px] [-webkit-text-stroke:1px_white]">No Camera Selection</T>
        </div>
        <div className="flex h-[1250px] w-[1536px] shrink-0 flex-col border-l-4 border-[#141414] bg-[#565656]">
          <Tabs />
          <div className="flex w-full flex-1 border-b-[6px] border-l-8 border-b-[#404040] border-l-[#626262]">
            <div className="w-[440px] shrink-0">
              <div className="ml-[106px] h-[6px] w-[1418px] bg-[#646464]" />
              <T className={"mt-[16px] ml-[24px] w-[87px] " + SM}>Joysticks</T>
              <div className="mt-[22px] flex items-start">
                <LedGrid className="ml-[21px]" />
                <div className="ml-[9px] flex gap-[34px]"><Stick /><Stick /></div>
                <LedGrid className="ml-[11px]" />
              </div>
              <T className={"mt-[50px] ml-[34px] w-[124px] " + SM}>Drive Motors</T>
              <T className={"mt-[18px] ml-[156px] w-[57px] " + SM}>Front</T>
              <Motors />
              <T className={"mt-2 ml-[156px] w-[50px] " + SM}>Back</T>
              <div className="mt-12 flex items-center">
                <div className="ml-[31px] size-[21px] rounded-full bg-[radial-gradient(circle_at_35%_32%,#b4ff8a_0%,#4dff10_28%,#3de800_62%,#2a6a18_72%)]" />
                <T className={"ml-[12px] w-[157px] " + SM}>NT Connection</T>
              </div>
            </div>
            <div>
              <div className="flex pt-[22px]">
                <T className={"mt-[7px] ml-[233px] w-[60px] " + MD}>Gyro</T>
                <T className="mt-px ml-[170px] h-[39px] w-[21px] text-[34px] leading-10">0</T>
              </div>
              <Dial />
              <Selector />
            </div>
          </div>
        </div>
      </div>
      <Strip />
      <div className="flex h-[400px] shrink-0">
        <SideBar />
        <Setup />
        <Status />
        <Messages />
        <RightBar />
      </div>
      <Taskbar />
    </div>
  );
}
